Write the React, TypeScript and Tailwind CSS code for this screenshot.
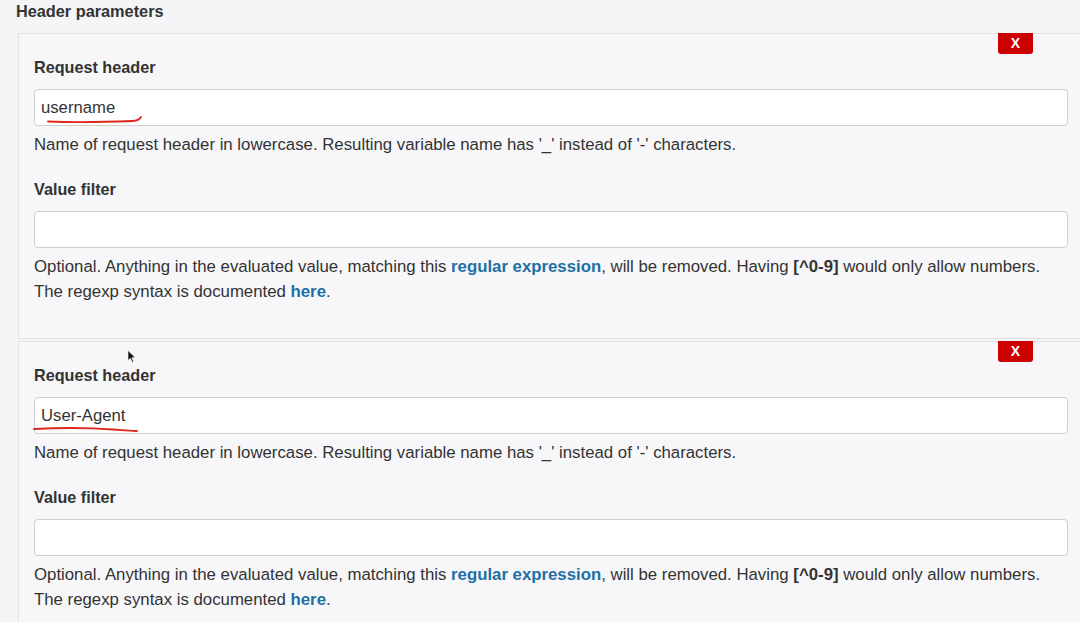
import React from "react";

function RemoveButton() {
  return (
    <button className="absolute top-[-1px] right-[50px] w-[35px] h-[21px] bg-[#cc0000] rounded-b-[3px] text-white text-[14px] font-bold leading-[21px] text-center">
      X
    </button>
  );
}

function TextInput({ value, mark }: { value: string; mark?: React.ReactNode }) {
  return (
    <div className="relative">
      <div className="h-[37px] bg-white border border-[#cfcfd2] rounded-[4px] px-[6px] flex items-center text-[16.7px] text-[#333]">
        {value}
      </div>
      {mark}
    </div>
  );
}

function HeaderCard({
  value,
  mark,
  cursor,
}: {
  value: string;
  mark?: React.ReactNode;
  cursor?: boolean;
}) {
  return (
    <div className="relative w-[1066px] bg-[#f7f7f9] border border-[#e2e2e5] px-[15px] pt-[22px] pb-[34px]">
      <RemoveButton />
      {cursor && (
        <svg className="absolute left-[108px] top-[8px]" width="9" height="13" viewBox="0 0 9 13">
          <path d="M1 0.5 L1 10.5 L3.4 8.3 L5.2 12.3 L6.6 11.6 L4.9 7.8 L8.2 7.6 Z" fill="#111" stroke="#fff" strokeWidth="0.6" />
        </svg>
      )}
      <label className="block text-[16.2px] leading-[22px] font-bold text-[#333]">Request header</label>
      <div className="mt-[11px]">
        <TextInput value={value} mark={mark} />
      </div>
      <p className="mt-[7px] text-[16.8px] leading-[24px] text-[#333]">
        Name of request header in lowercase. Resulting variable name has '_' instead of '-' characters.
      </p>
      <label className="block mt-[21px] text-[16.2px] leading-[22px] font-bold text-[#333]">Value filter</label>
      <div className="mt-[11px]">
        <TextInput value="" />
      </div>
      <p className="mt-[6px] text-[16.8px] leading-[25px] text-[#333]">
        Optional. Anything in the evaluated value, matching this{" "}
        <a className="font-bold text-[#1f6fa5]">regular expression</a>, will be removed. Having{" "}
        <b>[^0-9]</b> would only allow numbers.
        <br />
        The regexp syntax is documented <a className="font-bold text-[#1f6fa5]">here</a>.
      </p>
    </div>
  );
}

export default function App() {
  return (
    <main
      className="w-[1080px] h-[622px] overflow-hidden bg-[#f5f5f7] text-[#333]"
      style={{ fontFamily: '"Liberation Sans", Arial, sans-serif' }}
    >
      <h2 className="px-4 text-[16.3px] leading-[22px] font-bold text-[#333]">Header parameters</h2>

      <div className="mt-[11px] ml-[18px] flex flex-col gap-[2px]">
        {/* Primeiro cabeçalho */}
        <HeaderCard
          value="username"
          mark={
            <svg className="absolute left-[13px] top-[25px]" width="96" height="10" viewBox="0 0 96 10">
              <path d="M1 7.5 C 25 8.5, 60 8, 85 7 C 90 6.8, 93 5, 94 3" fill="none" stroke="#e0261b" strokeWidth="1.8" strokeLinecap="round" />
            </svg>
          }
        />

        {/* Segundo cabeçalho */}
        <HeaderCard
          value="User-Agent"
          cursor
          mark={
            <svg className="absolute left-[-1px] top-[29px]" width="106" height="10" viewBox="0 0 106 10">
              <path d="M1 3 C 30 1.5, 60 2, 80 3.5 C 90 4.2, 96 5.2, 104 5" fill="none" stroke="#e0261b" strokeWidth="1.8" strokeLinecap="round" />
            </svg>
          }
        />
      </div>
    </main>
  );
}
